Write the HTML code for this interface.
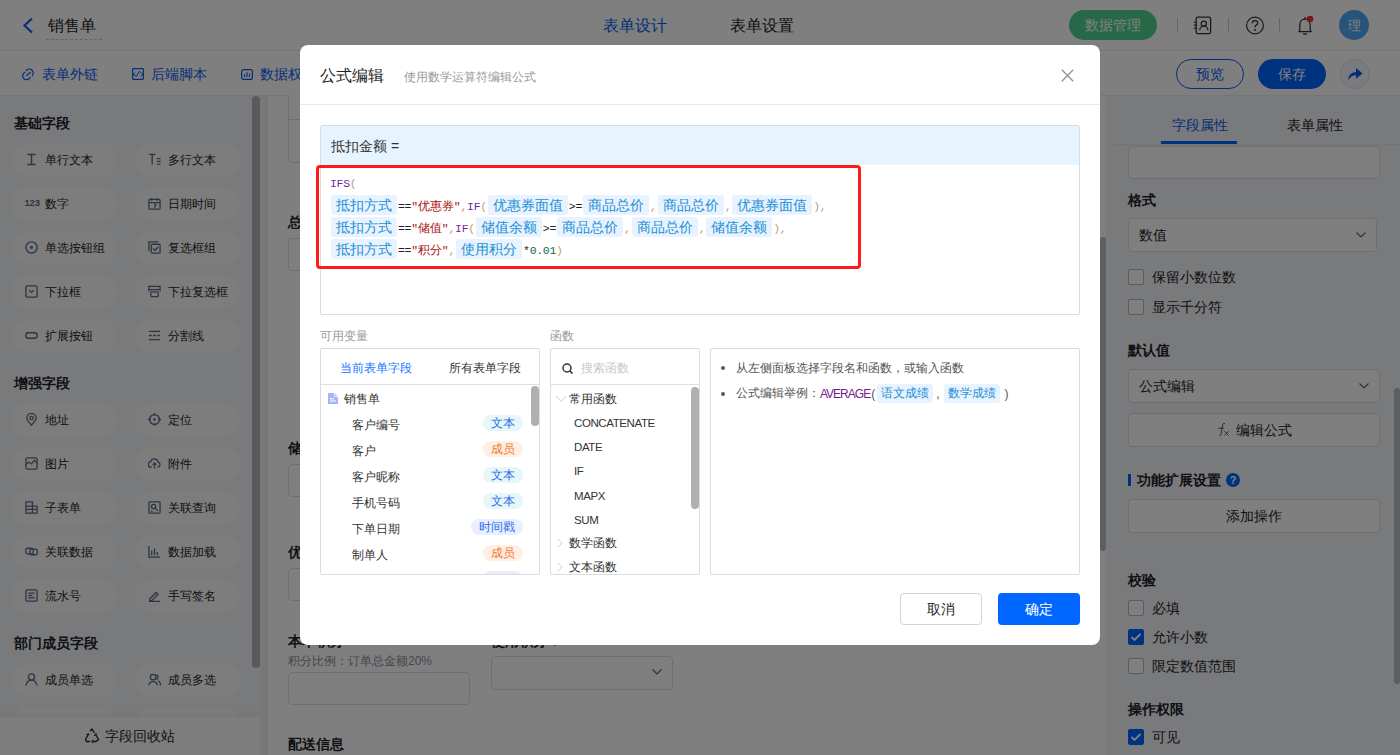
<!DOCTYPE html>
<html><head><meta charset="utf-8">
<style>
*{box-sizing:border-box}
html,body{margin:0;padding:0}
body{width:1400px;height:755px;overflow:hidden;position:relative;font-family:"Liberation Sans",sans-serif;color:#1f2329;background:#fff}
.a{position:absolute}
.t{position:absolute;white-space:nowrap;line-height:1}
svg{display:block}
/* sidebar pills */
.pill{position:absolute;width:105px;height:34px;border-radius:17px;background:#fafbfc}
.pill .ic{position:absolute;left:13px;top:9.5px;width:13px;height:13px}
.pill span{position:absolute;left:33px;top:11px;font-size:12px;line-height:12px;color:#1f2329;white-space:nowrap}
.sec{position:absolute;left:14px;font-size:14px;font-weight:bold;line-height:14px;color:#1f2329}
.box{position:absolute;border:1px solid #dcdfe6;border-radius:4px;background:#fff}
.lbl{position:absolute;font-size:14px;font-weight:bold;line-height:14px;color:#1f2329;white-space:nowrap}
.cb{position:absolute;width:16px;height:16px;border:1px solid #b5bac2;border-radius:2px;background:#fff}
.cb.on{background:#0066ff;border-color:#0066ff}
.cbt{position:absolute;font-size:14px;line-height:14px;color:#1f2329;white-space:nowrap}
/* modal */
.chip{letter-spacing:0;display:inline-block;background:#e8f3ff;color:#1a8fd6;font-family:"Liberation Sans",sans-serif;font-size:14px;line-height:20px;height:20px;padding:0 5px;border-radius:3px;margin:0 1px;vertical-align:top}
.m{font-family:"Liberation Mono",monospace;font-size:11.5px;letter-spacing:-0.3px}
.kw{color:#7a1fa2}
.str{color:#a11}
.op{color:#222}
.pu{color:#b8a070}
.num{color:#164}
.cj{font-family:"Liberation Sans",sans-serif;font-size:12px;letter-spacing:0}
.tag{position:absolute;right:16px;height:16px;border-radius:8px;font-size:12px;line-height:16px;padding:0 8px;white-space:nowrap}
.tg-p{background:#efeaff;color:#7a5af0}
.tg-t{background:#e6f7f7;color:#2b6cf0}
.tg-m{background:#ffeee3;color:#f07a2a}
.tg-d{background:#e8f0ff;color:#2b6cf0}
.vi{position:absolute;left:31px;font-size:12px;line-height:12px;color:#333;white-space:nowrap}
.fi{position:absolute;left:23px;font-size:12px;line-height:12px;color:#333;white-space:nowrap}
</style></head>
<body>

<!-- ============ HEADER ============ -->
<div class="a" style="left:0;top:0;width:1400px;height:51px;background:#fff;border-bottom:1px solid #ebedf0"></div>
<svg class="a" style="left:22px;top:17px" width="12" height="17" viewBox="0 0 12 17"><path d="M10 1.5 L2.5 8.5 L10 15.5" fill="none" stroke="#0a5cf0" stroke-width="2.2"/></svg>
<div class="t" style="left:48px;top:17px;font-size:16px;line-height:17px;color:#1f2329">销售单</div>
<div class="a" style="left:46px;top:39px;width:56px;border-top:1px dashed #c8cbd0"></div>
<div class="t" style="left:603px;top:17px;font-size:16px;line-height:17px;color:#0a5cf0">表单设计</div>
<div class="t" style="left:730px;top:17px;font-size:16px;line-height:17px;color:#1f2329">表单设置</div>
<div class="a" style="left:1069px;top:10px;width:88px;height:30px;border-radius:15px;background:#4cd18f"></div>
<div class="t" style="left:1085px;top:18px;font-size:14px;line-height:14px;color:#fff">数据管理</div>
<div class="a" style="left:1177px;top:18px;width:1px;height:14px;background:#c9cdd4"></div>
<svg class="a" style="left:1193px;top:16px" width="19" height="19" viewBox="0 0 19 19" fill="none" stroke="#333" stroke-width="1.25"><rect x="3.1" y="1.1" width="14.5" height="16.6" rx="1.6"/><circle cx="10.8" cy="7.6" r="2.6"/><path d="M6.7 14.3A4.1 4.1 0 0 1 14.9 14.3"/><path d="M0.8 6.2h3.4M0.8 9.1h3.4M0.8 12.2h3.4" stroke-width="1.1"/></svg>
<div class="a" style="left:1228px;top:18px;width:1px;height:14px;background:#c9cdd4"></div>
<svg class="a" style="left:1245px;top:16px" width="20" height="19" viewBox="0 0 20 19"><circle cx="10" cy="9.5" r="8.4" fill="none" stroke="#333" stroke-width="1.2"/><path d="M7.3 7.2 Q7.4 4.6 10 4.6 Q12.7 4.6 12.7 7 Q12.7 8.6 10.9 9.4 Q10 9.9 10 11.3" fill="none" stroke="#333" stroke-width="1.25"/><circle cx="10" cy="14" r="1" fill="#333"/></svg>
<div class="a" style="left:1279px;top:18px;width:1px;height:14px;background:#c9cdd4"></div>
<svg class="a" style="left:1296px;top:15px" width="20" height="21" viewBox="0 0 20 21"><path d="M3 16.5 L3.8 15 V10 Q3.8 4.5 9 4 Q14.2 4.5 14.2 10 V15 L15.2 16.5 Z" fill="none" stroke="#333" stroke-width="1.25" stroke-linejoin="round"/><path d="M7 19h4" stroke="#333" stroke-width="1.25"/><path d="M9 2v2" stroke="#333" stroke-width="1.2"/><circle cx="14" cy="4" r="3.3" fill="#f0322d"/></svg>
<div class="a" style="left:1339px;top:10px;width:30px;height:30px;border-radius:15px;background:#4fa8f0"></div>
<div class="t" style="left:1348px;top:19px;font-size:13px;line-height:13px;color:#fff">理</div>

<!-- ============ TOOLBAR ============ -->
<div class="a" style="left:0;top:51px;width:1400px;height:45px;background:#fff;border-bottom:1px solid #ebedf0"></div>
<svg class="a" style="left:22px;top:67px" width="14" height="14" viewBox="0 0 14 14" fill="none" stroke="#0a5cf0" stroke-width="1.2" stroke-linecap="round"><path d="M4.2 3.5A3.9 3.9 0 1 1 10.3 8.7"/><path d="M3 5.2A3.9 3.9 0 1 0 8.2 10.2"/><path d="M4.6 8.6L8.4 5.3"/></svg>
<div class="t" style="left:42px;top:67px;font-size:14px;line-height:14px;color:#0a5cf0">表单外链</div>
<svg class="a" style="left:132px;top:68px" width="12" height="12" viewBox="0 0 12 12" fill="none" stroke="#0a5cf0"><rect x="0.6" y="0.6" width="10.8" height="10.8" rx="0.8" stroke-width="1.2"/><path d="M3.3 4.3L1 6.4L4.5 8.4L7.4 3.3L11 6.4L8.5 8.3" stroke-width="1"/></svg>
<div class="t" style="left:151px;top:67px;font-size:14px;line-height:14px;color:#0a5cf0">后端脚本</div>
<svg class="a" style="left:241px;top:69px" width="12" height="11" viewBox="0 0 12 11" fill="none" stroke="#0a5cf0"><rect x="0.6" y="0.6" width="10.8" height="9.8" rx="2" stroke-width="1.2"/><path d="M3.5 8V5.2M6 8V3.2M8.5 8V4.6" stroke-width="1.1"/></svg>
<div class="t" style="left:260px;top:67px;font-size:14px;line-height:14px;color:#0a5cf0">数据权限</div>
<div class="a" style="left:1176px;top:59px;width:68px;height:30px;border-radius:15px;border:1px solid #0a5cf0;background:#fff"></div>
<div class="t" style="left:1196px;top:67px;font-size:14px;line-height:14px;color:#0a5cf0">预览</div>
<div class="a" style="left:1258px;top:59px;width:68px;height:30px;border-radius:15px;background:#0066ff"></div>
<div class="t" style="left:1278px;top:67px;font-size:14px;line-height:14px;color:#fff">保存</div>
<div class="a" style="left:1340px;top:59px;width:30px;height:30px;border-radius:15px;border:1px solid #d9e2f2;background:#f4f7fc"></div>
<svg class="a" style="left:1346px;top:66px" width="18" height="16" viewBox="0 0 18 16"><path d="M2 14.5 Q2.2 6.5 10 6 V2 L16.5 7.5 L10 12.8 V9.3 Q5 9.2 2 14.5 Z" fill="#0a5cf0"/></svg>

<!-- ============ SIDEBAR ============ -->
<div class="a" style="left:0;top:96px;width:260px;height:659px;background:#f3f4f7"></div>
<div class="a" style="left:252px;top:96px;width:8px;height:572px;border-radius:4px;background:#b4b5b8"></div>
<div class="sec" style="top:116px">基础字段</div>
<div class="sec" style="top:376px">增强字段</div>
<div class="sec" style="top:636px">部门成员字段</div>
<!--PILLS-->
<div class="pill" style="left:12px;top:143px"><svg class="ic" width="14" height="14" viewBox="0 0 14 14" fill="none" stroke="#5b6a88" stroke-width="1.4"><path d="M2.5 1.5h9M2.5 12.5h9M7 1.5v11" stroke-width="1.6"/></svg><span>单行文本</span></div>
<div class="pill" style="left:135px;top:143px"><svg class="ic" width="14" height="14" viewBox="0 0 14 14" fill="none" stroke="#5b6a88" stroke-width="1.4"><path d="M1 1.5h7M4.5 1.5v11M9.5 6h4M9.5 9h4M9.5 12h4" stroke-width="1.5"/></svg><span>多行文本</span></div>
<div class="pill" style="left:12px;top:187px"><div class="ic" style="left:12.5px;top:10px;width:auto;height:auto;font-size:9.5px;font-weight:bold;line-height:11px;color:#5b6a88;letter-spacing:-0.2px">123</div><span>数字</span></div>
<div class="pill" style="left:135px;top:187px"><svg class="ic" width="14" height="14" viewBox="0 0 14 14" fill="none" stroke="#5b6a88" stroke-width="1.4"><rect x="1" y="2.5" width="12" height="10.5" rx="1"/><path d="M1 6h12M4 1v3M10 1v3M6.5 8h2l-1.5 3.5"/></svg><span>日期时间</span></div>
<div class="pill" style="left:12px;top:231px"><svg class="ic" width="14" height="14" viewBox="0 0 14 14" fill="none" stroke="#5b6a88" stroke-width="1.4"><circle cx="7" cy="7" r="6"/><circle cx="7" cy="7" r="1.6" fill="#5b6a88" stroke="none"/></svg><span>单选按钮组</span></div>
<div class="pill" style="left:135px;top:231px"><svg class="ic" width="14" height="14" viewBox="0 0 14 14" fill="none" stroke="#5b6a88" stroke-width="1.4"><path d="M1 11V1h10"/><rect x="3.5" y="3.5" width="9.5" height="9.5" rx="1"/><path d="M5.5 8l2 2 3.5-3.5"/></svg><span>复选框组</span></div>
<div class="pill" style="left:12px;top:275px"><svg class="ic" width="14" height="14" viewBox="0 0 14 14" fill="none" stroke="#5b6a88" stroke-width="1.4"><rect x="1" y="1" width="12" height="12" rx="1"/><path d="M4.5 5.5L7 8l2.5-2.5"/></svg><span>下拉框</span></div>
<div class="pill" style="left:135px;top:275px"><svg class="ic" width="14" height="14" viewBox="0 0 14 14" fill="none" stroke="#5b6a88" stroke-width="1.4"><path d="M1 7V1.5h12V7M1 5h12"/><rect x="3" y="7.5" width="8" height="5" rx="1"/></svg><span>下拉复选框</span></div>
<div class="pill" style="left:12px;top:319px"><svg class="ic" width="14" height="14" viewBox="0 0 14 14" fill="none" stroke="#5b6a88" stroke-width="1.4"><rect x="0.8" y="4" width="12.4" height="6" rx="3" stroke-width="1.5"/></svg><span>扩展按钮</span></div>
<div class="pill" style="left:135px;top:319px"><svg class="ic" width="14" height="14" viewBox="0 0 14 14" fill="none" stroke="#5b6a88" stroke-width="1.4"><path d="M1 2.5h12M1 11.5h12M1 7h3M5.5 7h3M10 7h3"/></svg><span>分割线</span></div>
<div class="pill" style="left:12px;top:403px"><svg class="ic" width="14" height="14" viewBox="0 0 14 14" fill="none" stroke="#5b6a88" stroke-width="1.4"><path d="M7 13.2C4 10 2 7.8 2 5.5a5 5 0 0 1 10 0c0 2.3-2 4.5-5 7.7z"/><circle cx="7" cy="5.5" r="1.8"/></svg><span>地址</span></div>
<div class="pill" style="left:135px;top:403px"><svg class="ic" width="14" height="14" viewBox="0 0 14 14" fill="none" stroke="#5b6a88" stroke-width="1.4"><circle cx="7" cy="7" r="5.3"/><circle cx="7" cy="7" r="1.4" fill="#5b6a88" stroke="none"/><path d="M7 0v3M7 11v3M0 7h3M11 7h3"/></svg><span>定位</span></div>
<div class="pill" style="left:12px;top:447px"><svg class="ic" width="14" height="14" viewBox="0 0 14 14" fill="none" stroke="#5b6a88" stroke-width="1.4"><rect x="1" y="1" width="12" height="12" rx="1.5"/><path d="M1 8l3-2.5 3 2 3-4 3 3"/></svg><span>图片</span></div>
<div class="pill" style="left:135px;top:447px"><svg class="ic" width="14" height="14" viewBox="0 0 14 14" fill="none" stroke="#5b6a88" stroke-width="1.4"><path d="M4 11H3.5A3 3 0 0 1 3 5a4 4 0 0 1 7.8.5A2.8 2.8 0 0 1 10.5 11H10M7 12.5v-6M5 8.5l2-2 2 2"/></svg><span>附件</span></div>
<div class="pill" style="left:12px;top:491px"><svg class="ic" width="14" height="14" viewBox="0 0 14 14" fill="none" stroke="#5b6a88" stroke-width="1.4"><path d="M1 13V1h7v4.5h5V13zM1 5.5h7M1 9h12M8 5.5V13"/></svg><span>子表单</span></div>
<div class="pill" style="left:135px;top:491px"><svg class="ic" width="14" height="14" viewBox="0 0 14 14" fill="none" stroke="#5b6a88" stroke-width="1.4"><rect x="1" y="1" width="12" height="12" rx="1"/><circle cx="6" cy="6" r="2.3"/><path d="M7.7 7.7L10.5 10.5M3 11h2"/></svg><span>关联查询</span></div>
<div class="pill" style="left:12px;top:535px"><svg class="ic" width="14" height="14" viewBox="0 0 14 14" fill="none" stroke="#5b6a88" stroke-width="1.4"><rect x="0.8" y="3.5" width="8" height="6" rx="2"/><rect x="5.2" y="4.5" width="8" height="6" rx="2"/></svg><span>关联数据</span></div>
<div class="pill" style="left:135px;top:535px"><svg class="ic" width="14" height="14" viewBox="0 0 14 14" fill="none" stroke="#5b6a88" stroke-width="1.4"><path d="M1 1v12h12M4 11V6M7 11V3.5M10 11V7.5"/></svg><span>数据加载</span></div>
<div class="pill" style="left:12px;top:579px"><svg class="ic" width="14" height="14" viewBox="0 0 14 14" fill="none" stroke="#5b6a88" stroke-width="1.4"><rect x="1" y="1" width="12" height="12" rx="1"/><path d="M3.5 4.5h7M3.5 7h4.5M3.5 9.5h7"/></svg><span>流水号</span></div>
<div class="pill" style="left:135px;top:579px"><svg class="ic" width="14" height="14" viewBox="0 0 14 14" fill="none" stroke="#5b6a88" stroke-width="1.4"><path d="M2 10.5l6.8-6.8 2 2L4 12.5H2zM1 13.3h12"/></svg><span>手写签名</span></div>
<div class="pill" style="left:12px;top:663px"><svg class="ic" width="14" height="14" viewBox="0 0 14 14" fill="none" stroke="#5b6a88" stroke-width="1.4"><circle cx="7" cy="4.3" r="3.3"/><path d="M1.2 13.5a5.8 5.8 0 0 1 11.6 0"/></svg><span>成员单选</span></div>
<div class="pill" style="left:135px;top:663px"><svg class="ic" width="14" height="14" viewBox="0 0 14 14" fill="none" stroke="#5b6a88" stroke-width="1.4"><circle cx="5.5" cy="4.5" r="3"/><path d="M0.8 13.2a4.8 4.8 0 0 1 9.4 0M9 1.8a3 3 0 0 1 0 5.5M11 8.5a4.8 4.8 0 0 1 2.5 4.7"/></svg><span>成员多选</span></div>
<div class="pill" style="left:12px;top:707px"><span></span></div>
<div class="pill" style="left:135px;top:707px"><span></span></div>
<!--/PILLS--><!--/PILLS--><!--/PILLS-->
<div class="a" style="left:0;top:717px;width:260px;height:38px;background:#fbfbfc;box-shadow:0 -3px 8px rgba(0,0,0,0.05)"></div>
<svg class="a" style="left:84px;top:728px" width="16" height="15" viewBox="0 0 16 15"><path d="M6 3 L8 1 L10.5 5 M12 7 L14.5 11.5 L12 13.5 H9.5 M6 13.5 H2.5 L1.5 11.5 L4 7" fill="none" stroke="#1f2329" stroke-width="1.3"/><path d="M9.5 12 L8 13.5 L9.5 15 M2.5 6 L4 7 L5.2 5.5 M12 5 L12 7 L10 7.3" fill="none" stroke="#1f2329" stroke-width="1.2"/></svg>
<div class="t" style="left:105px;top:729px;font-size:14px;line-height:14px;color:#1f2329">字段回收站</div>

<!-- ============ CANVAS ============ -->
<div class="a" style="left:260px;top:96px;width:846px;height:659px;background:#eef0f4"></div>
<div class="a" style="left:268px;top:96px;width:838px;height:659px;background:#fff"></div>
<div class="box" style="left:288px;top:80px;width:400px;height:83px;clip-path:inset(15px -2px -2px -2px)"></div>
<div class="a" style="left:289px;top:119px;width:399px;height:1px;background:#dcdfe6"></div>
<div class="lbl" style="left:288px;top:215px">总金额</div>
<div class="box" style="left:288px;top:238px;width:182px;height:33px"></div>
<div class="lbl" style="left:288px;top:441px">储值余额</div>
<div class="box" style="left:288px;top:464px;width:182px;height:33px"></div>
<div class="lbl" style="left:288px;top:545px">优惠券面值</div>
<div class="box" style="left:288px;top:568px;width:182px;height:33px"></div>
<div class="lbl" style="left:288px;top:634px">本单积分</div>
<div class="t" style="left:288px;top:655px;font-size:12px;line-height:13px;color:#86909c">积分比例：订单总金额20%</div>
<div class="box" style="left:288px;top:672px;width:182px;height:33px"></div>
<div class="lbl" style="left:491px;top:634px">使用积分 <span style="color:#86909c">?</span></div>
<div class="box" style="left:491px;top:656px;width:182px;height:34px"></div>
<svg class="a" style="left:651px;top:667px" width="12" height="10" viewBox="0 0 12 10"><path d="M1.5 2.5L6 7l4.5-4.5" fill="none" stroke="#5c6473" stroke-width="1.2"/></svg>
<div class="lbl" style="left:288px;top:737px">配送信息</div>
<div class="a" style="left:1100px;top:237px;width:6px;height:314px;border-radius:3px;background:#b9bcc2"></div>


<!-- ============ RIGHT PANEL ============ -->
<div class="a" style="left:1106px;top:96px;width:294px;height:659px;background:#f3f4f7"></div>
<div class="t" style="left:1172px;top:118px;font-size:14px;line-height:14px;color:#0a5cf0">字段属性</div>
<div class="t" style="left:1287px;top:118px;font-size:14px;line-height:14px;color:#1f2329">表单属性</div>
<div class="a" style="left:1114px;top:144px;width:286px;height:1px;background:#e5e6eb"></div>
<div class="a" style="left:1161px;top:141px;width:76px;height:3px;background:#0066ff"></div>
<div class="box" style="left:1128px;top:146px;width:252px;height:33px"></div>
<div class="a" style="left:1114px;top:145px;width:286px;height:0px;"></div>
<div class="lbl" style="left:1128px;top:193px">格式</div>
<div class="box" style="left:1128px;top:218px;width:249px;height:34px"></div>
<div class="t" style="left:1139px;top:228px;font-size:14px;line-height:14px;color:#1f2329">数值</div>
<svg class="a" style="left:1355px;top:230px" width="12" height="10" viewBox="0 0 12 10"><path d="M1.5 2.5L6 7l4.5-4.5" fill="none" stroke="#5c6473" stroke-width="1.2"/></svg>
<div class="cb" style="left:1128px;top:269px"></div>
<div class="cbt" style="left:1152px;top:270px">保留小数位数</div>
<div class="cb" style="left:1128px;top:299px"></div>
<div class="cbt" style="left:1152px;top:300px">显示千分符</div>
<div class="lbl" style="left:1128px;top:343px">默认值</div>
<div class="box" style="left:1128px;top:369px;width:252px;height:34px"></div>
<div class="t" style="left:1139px;top:379px;font-size:14px;line-height:14px;color:#1f2329">公式编辑</div>
<svg class="a" style="left:1358px;top:381px" width="12" height="10" viewBox="0 0 12 10"><path d="M1.5 2.5L6 7l4.5-4.5" fill="none" stroke="#5c6473" stroke-width="1.2"/></svg>
<div class="box" style="left:1128px;top:413px;width:252px;height:34px"></div>
<svg class="a" style="left:1217px;top:422px" width="14" height="15" viewBox="0 0 14 15" fill="none" stroke="#4e5969" stroke-width="1"><path d="M8 1.8Q6.8 0.6 5.9 2.2L4.9 7.5L4 12.5Q3.5 14.2 2.3 13.6"/><path d="M1.5 6.3h5.3"/><path d="M7.6 9.2L11.6 13.6M11.6 9.2L7.6 13.6"/></svg>
<div class="t" style="left:1236px;top:423px;font-size:14px;line-height:14px;color:#1f2329">编辑公式</div>
<div class="a" style="left:1128px;top:474px;width:3px;height:12px;background:#0066ff"></div>
<div class="lbl" style="left:1137px;top:473px">功能扩展设置</div>
<div class="a" style="left:1226px;top:473px;width:14px;height:14px;border-radius:7px;background:#0066ff;color:#fff;font-size:11px;line-height:14px;text-align:center;font-weight:bold">?</div>
<div class="box" style="left:1128px;top:499px;width:252px;height:34px"></div>
<div class="t" style="left:1226px;top:509px;font-size:14px;line-height:14px;color:#1f2329">添加操作</div>
<div class="lbl" style="left:1128px;top:573px">校验</div>
<div class="cb" style="left:1128px;top:600px"></div>
<div class="cbt" style="left:1152px;top:601px">必填</div>
<div class="cb on" style="left:1128px;top:629px"><svg width="14" height="14" viewBox="0 0 14 14"><path d="M2.5 7l3 3 6-6" fill="none" stroke="#fff" stroke-width="1.8"/></svg></div>
<div class="cbt" style="left:1152px;top:630px">允许小数</div>
<div class="cb" style="left:1128px;top:658px"></div>
<div class="cbt" style="left:1152px;top:659px">限定数值范围</div>
<div class="lbl" style="left:1128px;top:702px">操作权限</div>
<div class="cb on" style="left:1128px;top:729px"><svg width="14" height="14" viewBox="0 0 14 14"><path d="M2.5 7l3 3 6-6" fill="none" stroke="#fff" stroke-width="1.8"/></svg></div>
<div class="cbt" style="left:1152px;top:730px">可见</div>
<div class="a" style="left:1394px;top:388px;width:6px;height:296px;border-radius:3px;background:#b9bcc2"></div>


<!-- ============ OVERLAY ============ -->
<div class="a" style="left:0;top:0;width:1400px;height:755px;background:rgba(0,0,0,.5)"></div>

<!-- ============ MODAL ============ -->
<div class="a" style="left:300px;top:45px;width:800px;height:600px;background:#fff;border-radius:8px;overflow:hidden">

<div class="t" style="left:20px;top:23px;font-size:16px;line-height:16px;color:#1f2329">公式编辑</div>
<div class="t" style="left:104px;top:26px;font-size:12px;line-height:12px;color:#999">使用数学运算符编辑公式</div>
<svg class="a" style="left:761px;top:24px" width="13" height="13" viewBox="0 0 13 13"><path d="M0.8 0.8L12.2 12.2M12.2 0.8L0.8 12.2" stroke="#8a8f99" stroke-width="1.3"/></svg>
<div class="a" style="left:0;top:59px;width:800px;height:1px;background:#e8e8e8"></div>
<div class="a" style="left:20px;top:80px;width:760px;height:190px;border:1px solid #dcdcdc;border-radius:2px;background:#fff"></div>
<div class="a" style="left:21px;top:81px;width:758px;height:39px;background:#e6f4ff"></div>
<div class="t" style="left:31px;top:94px;font-size:14px;line-height:14px;color:#333">抵扣金额 =</div>
<div class="a m" style="left:30px;top:128px;line-height:22px;white-space:nowrap">
<div style="height:22px"><span class="kw">IFS</span><span class="pu">(</span></div>
<div style="height:22px"><span class="chip">抵扣方式</span><span class="op">==</span><span class="str">"<span class="cj">优惠券</span>"</span><span class="pu">,</span><span class="kw">IF</span><span class="pu">(</span><span class="chip">优惠券面值</span><span class="op">&gt;=</span><span class="chip">商品总价</span><span class="pu">,</span><span class="chip">商品总价</span><span class="pu">,</span><span class="chip">优惠券面值</span><span class="pu">),</span></div>
<div style="height:22px"><span class="chip">抵扣方式</span><span class="op">==</span><span class="str">"<span class="cj">储值</span>"</span><span class="pu">,</span><span class="kw">IF</span><span class="pu">(</span><span class="chip">储值余额</span><span class="op">&gt;=</span><span class="chip">商品总价</span><span class="pu">,</span><span class="chip">商品总价</span><span class="pu">,</span><span class="chip">储值余额</span><span class="pu">),</span></div>
<div style="height:22px"><span class="chip">抵扣方式</span><span class="op">==</span><span class="str">"<span class="cj">积分</span>"</span><span class="pu">,</span><span class="chip">使用积分</span><span class="op">*</span><span class="num">0.01</span><span class="pu">)</span></div>
</div>
<div class="t" style="left:20px;top:285px;font-size:12px;line-height:12px;color:#999">可用变量</div>
<div class="t" style="left:250px;top:285px;font-size:12px;line-height:12px;color:#999">函数</div>
<div class="a" style="left:20px;top:303px;width:220px;height:227px;border:1px solid #dcdcdc;border-radius:2px;overflow:hidden">
  <div class="t" style="left:19px;top:13px;font-size:12px;line-height:12px;color:#1677ff">当前表单字段</div>
  <div class="t" style="left:128px;top:13px;font-size:12px;line-height:12px;color:#333">所有表单字段</div>
  <div class="a" style="left:0;top:35px;width:220px;height:1px;background:#e0e0e0"></div>
  <div class="a" style="left:0;top:36px;width:218px;height:190px;overflow:hidden">
    <svg class="a" style="left:7px;top:8px" width="10" height="11" viewBox="0 0 10 11"><path d="M0 0h6.5l3.5 3.5V11H0z" fill="#a8b4f8"/><path d="M6.5 0v3.5H10" fill="none" stroke="#fff" stroke-width="0.8"/><path d="M2 5.8h4M2 8h6" stroke="#fff" stroke-width="1"/></svg>
    <div class="t" style="left:23px;top:8px;font-size:12px;line-height:12px;color:#333">销售单</div>
    <div class="vi" style="top:33.5px">客户编号</div><div class="tag tg-t" style="top:29.5px">文本</div><div class="vi" style="top:59.5px">客户</div><div class="tag tg-m" style="top:55.5px">成员</div><div class="vi" style="top:85.5px">客户昵称</div><div class="tag tg-t" style="top:81.5px">文本</div><div class="vi" style="top:111.5px">手机号码</div><div class="tag tg-t" style="top:107.5px">文本</div><div class="vi" style="top:137.5px">下单日期</div><div class="tag tg-d" style="top:133.5px">时间戳</div><div class="vi" style="top:163.5px">制单人</div><div class="tag tg-m" style="top:159.5px">成员</div><div class="vi" style="top:189.5px"></div><div class="tag tg-p" style="top:185.5px">　　</div>
  </div>
  <div class="a" style="left:210px;top:37px;width:8px;height:40px;border-radius:4px;background:#b0b0b0"></div>
</div>
<div class="a" style="left:250px;top:303px;width:150px;height:227px;border:1px solid #dcdcdc;border-radius:2px;overflow:hidden">
  <svg class="a" style="left:11px;top:14px" width="12" height="11" viewBox="0 0 12 11"><circle cx="5" cy="5" r="4" fill="none" stroke="#333" stroke-width="1.5"/><path d="M8 8l2.5 2.5" stroke="#333" stroke-width="1.6"/></svg>
  <div class="t" style="left:30px;top:13px;font-size:12px;line-height:12px;color:#c5cad3">搜索函数</div>
  <div class="a" style="left:0;top:35px;width:150px;height:1px;background:#e0e0e0"></div>
  <div class="a" style="left:0;top:36px;width:148px;height:190px;overflow:hidden"><svg class="a" style="left:4px;top:9.6px" width="12" height="8" viewBox="0 0 12 8"><path d="M1 1.2L6 6.3 11 1.2" fill="none" stroke="#c9cdd4" stroke-width="1"/></svg><div class="fi" style="left:18px;top:7.6px">常用函数</div><div class="fi" style="letter-spacing:-0.4px;font-size:11.5px;margin-top:1px;top:31.4px">CONCATENATE</div><div class="fi" style="letter-spacing:-0.4px;font-size:11.5px;margin-top:1px;top:55.3px">DATE</div><div class="fi" style="letter-spacing:-0.4px;font-size:11.5px;margin-top:1px;top:79.2px">IF</div><div class="fi" style="letter-spacing:-0.4px;font-size:11.5px;margin-top:1px;top:103.6px">MAPX</div><div class="fi" style="letter-spacing:-0.4px;font-size:11.5px;margin-top:1px;top:127.6px">SUM</div><svg class="a" style="left:6px;top:153.0px" width="6" height="10" viewBox="0 0 6 10"><path d="M1 1l4 4-4 4" fill="none" stroke="#c9cdd4" stroke-width="1"/></svg><div class="fi" style="left:18px;top:152.0px">数学函数</div><svg class="a" style="left:6px;top:177.0px" width="6" height="10" viewBox="0 0 6 10"><path d="M1 1l4 4-4 4" fill="none" stroke="#c9cdd4" stroke-width="1"/></svg><div class="fi" style="left:18px;top:176.0px">文本函数</div></div>
  <div class="a" style="left:140px;top:38px;width:8px;height:122px;border-radius:4px;background:#b0b0b0"></div>
</div>
<div class="a" style="left:410px;top:303px;width:370px;height:227px;border:1px solid #dcdcdc;border-radius:2px">
  <div class="a" style="left:10px;top:17px;width:4px;height:4px;border-radius:2px;background:#4e5969"></div>
  <div class="t" style="left:25px;top:13px;font-size:12px;line-height:12px;color:#555">从左侧面板选择字段名和函数，或输入函数</div>
  <div class="a" style="left:10px;top:43px;width:4px;height:4px;border-radius:2px;background:#4e5969"></div>
  <div class="a" style="left:25px;top:35px;height:19px;display:flex;align-items:center;white-space:nowrap;font-size:12px;color:#555">公式编辑举例：<span style="color:#7a1a8f;letter-spacing:-1px">AVERAGE</span><span style="margin-left:1px">(</span><span style="display:inline-block;background:#e8f3ff;color:#1a8fd6;padding:0 4px;border-radius:3px;line-height:19px;height:19px;margin:0 3px 0 2px">语文成绩</span>,<span style="display:inline-block;background:#e8f3ff;color:#1a8fd6;padding:0 4px;border-radius:3px;line-height:19px;height:19px;margin:0 4px 0 5px">数学成绩</span>)</div>
</div>
<div class="a" style="left:600px;top:548px;width:82px;height:32px;border:1px solid #d0d3d9;border-radius:4px;background:#fff"></div>
<div class="t" style="left:627px;top:557px;font-size:14px;line-height:14px;color:#1f2329">取消</div>
<div class="a" style="left:698px;top:548px;width:82px;height:32px;border-radius:4px;background:#0066ff"></div>
<div class="t" style="left:725px;top:557px;font-size:14px;line-height:14px;color:#fff">确定</div>

</div>
<div class="a" style="left:316px;top:165px;width:545px;height:104px;border:3px solid #ff1a1a;border-radius:4px"></div>
</body></html>
